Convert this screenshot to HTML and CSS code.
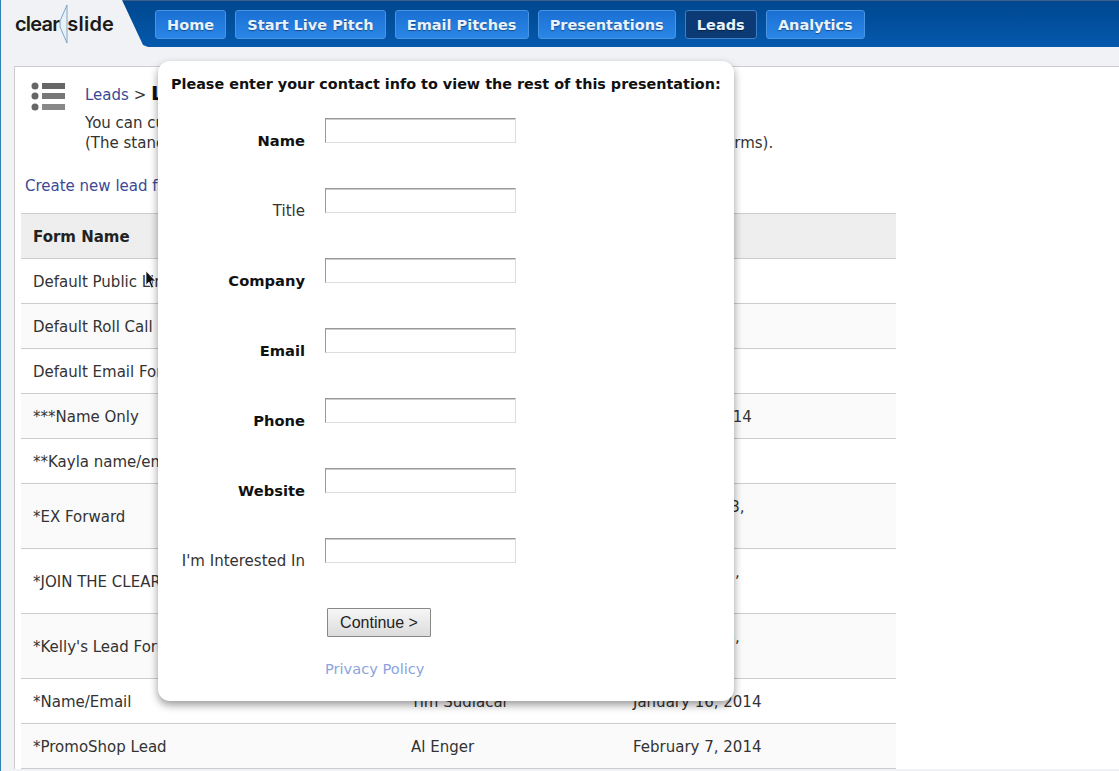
FILE: index.html
```html
<!DOCTYPE html>
<html lang="en">
<head>
    <meta charset="UTF-8">
    <title>ClearSlide - Leads</title>
    <link rel="stylesheet" href="styles.css">
</head>
<body>

<div class="header">
    <a class="logo">
        <span>clear</span>
        <svg class="logo-mark" width="12" height="40" viewBox="0 0 12 40">
            <path d="M9 1 L9 39 L2 23 L2 17 Z" fill="#e9f1f8" stroke="#7fa6c4" stroke-width="1"/>
        </svg>
        <span class="logo-slide">slide</span>
    </a>
    <div class="nav">
        <a class="nav-btn">Home</a>
        <a class="nav-btn">Start Live Pitch</a>
        <a class="nav-btn">Email Pitches</a>
        <a class="nav-btn">Presentations</a>
        <a class="nav-btn active">Leads</a>
        <a class="nav-btn">Analytics</a>
    </div>
</div>

<div class="panel">
    <div class="title-row">
        <svg class="list-icon" width="36" height="30" viewBox="0 0 36 30">
            <circle cx="5" cy="5" r="3.5" fill="#666"/>
            <circle cx="5" cy="15" r="3.5" fill="#666"/>
            <circle cx="5" cy="26" r="3.5" fill="#666"/>
            <rect x="12" y="2" width="23" height="6" fill="#666"/>
            <rect x="12" y="12" width="23" height="6" fill="#777"/>
            <rect x="12" y="23" width="23" height="6" fill="#888"/>
        </svg>
        <div class="title-text">
            <div class="crumb"><a class="link">Leads</a> &gt; <b class="crumb-title">Lead Forms</b></div>
            <p class="intro">You can customize the information you collect from viewers.<br>(The standard forms are provided by default, and you can create and revise custom forms).</p>
        </div>
    </div>

    <a class="link create-link">Create new lead form</a>

    <table class="leads">
        <tr><th class="col-name">Form Name</th><th class="col-by">Created By</th><th class="col-date">Created</th><th></th></tr>
        <tr><td>Default Public Link Form</td><td>ClearSlide</td><td>July 1, 2012</td><td></td></tr>
        <tr><td>Default Roll Call Form</td><td>ClearSlide</td><td>July 1, 2012</td><td></td></tr>
        <tr><td>Default Email Form</td><td>ClearSlide</td><td>July 1, 2012</td><td></td></tr>
        <tr><td>***Name Only</td><td>Tim Sudlacar</td><td>January 9, 2014</td><td></td></tr>
        <tr><td>**Kayla name/email</td><td>Kayla Ross</td><td>July 8, 2013</td><td></td></tr>
        <tr><td>*EX Forward</td><td>Al Enger</td><td>September 13,<br>2013</td><td></td></tr>
        <tr><td>*JOIN THE CLEARSLIDE TEAM</td><td>Tim Sudlacar</td><td>November 13,<br>2013</td><td></td></tr>
        <tr><td>*Kelly's Lead Form</td><td>Kelly Hart</td><td>November 18,<br>2013</td><td></td></tr>
        <tr><td>*Name/Email</td><td>Tim Sudlacar</td><td>January 16, 2014</td><td></td></tr>
        <tr><td>*PromoShop Lead</td><td>Al Enger</td><td>February 7, 2014</td><td></td></tr>
    </table>
</div>

<svg class="cursor" width="12" height="19" viewBox="0 0 12 19">
    <path d="M1 1 L1 15 L4 12 L6.5 18 L8.5 17 L6 11 L10.5 11 Z" fill="#111" stroke="#fff" stroke-width="0.7"/>
</svg>

<div class="modal">
    <h3 class="modal-title">Please enter your contact info to view the rest of this presentation:</h3>
    <div class="field"><label class="req">Name</label><input type="text"></div>
    <div class="field"><label>Title</label><input type="text"></div>
    <div class="field"><label class="req">Company</label><input type="text"></div>
    <div class="field"><label class="req">Email</label><input type="text"></div>
    <div class="field"><label class="req">Phone</label><input type="text"></div>
    <div class="field"><label class="req">Website</label><input type="text"></div>
    <div class="field"><label>I'm Interested In</label><input type="text"></div>
    <button class="continue">Continue &gt;</button>
    <a class="privacy">Privacy Policy</a>
</div>

</body>
</html>
```
FILE: styles.css
```css
html, body {
    margin: 0;
    height: 771px;
    overflow: hidden;
}
body {
    font-family: "DejaVu Sans", Verdana, sans-serif;
    font-size: 14px;
    color: #333;
    background-color: #f0f2f5;
    border-left: 1px solid #2f7fb5;
}
.header {
    display: flex;
    height: 47px;
}
.logo {
    width: 121px;
    flex: none;
    display: flex;
    align-items: center;
    padding-left: 14px;
    box-sizing: border-box;
    font-family: Inter, "Liberation Sans", sans-serif;
    font-size: 20px;
    font-weight: 600;
    letter-spacing: -0.8px;
    color: #1a1a1a;
}
.logo-mark {
    margin: 0 -3px 0 -1px;
}
.logo-slide {
    letter-spacing: 0.2px;
}
.nav {
    flex: 1;
    display: flex;
    gap: 9px;
    padding: 11px 0 0 33px;
    box-sizing: border-box;
    background: linear-gradient(#00478f, #0559ad);
    border-top: 1px solid #3b5f8a;
    clip-path: polygon(0 0, 100% 0, 100% 100%, 26px 100%, 21px 96%);
}
.nav-btn {
    height: 27px;
    padding: 0 11.1px;
    line-height: 28px;
    font-weight: bold;
    font-size: 14.5px;
    color: #e8f2fc;
    text-shadow: 0 1px 1px rgba(0, 0, 0, 0.4);
    background: linear-gradient(#1a70d2, #2a86e8);
    border: 1px solid #4a94e4;
    border-radius: 3px;
    margin-top: -2px;
}
.nav-btn.active {
    background: #0c3a74;
    border-color: #3f7fc8;
}
.panel {
    margin: 19px 0 0 13px;
    padding: 14px 0 0 6px;
    background-color: #fff;
    border: 1px solid #ccc;
    border-right: none;
    border-bottom: none;
}
.title-row {
    display: flex;
}
.list-icon {
    margin-left: 9px;
    flex: none;
}
.title-text {
    margin-left: 19px;
    padding-top: 2px;
}
.crumb {
    font-size: 15px;
    line-height: 20px;
}
.crumb-title {
    font-size: 20px;
    color: #111;
}
.intro {
    margin: 8px 0 0;
    line-height: 20px;
    white-space: nowrap;
    font-size: 15px;
}
.link {
    color: #3b4a96;
}
.create-link {
    display: block;
    margin: 23px 0 17px 4px;
    font-size: 15px;
    line-height: 20px;
}
.leads {
    width: 875px;
    border-collapse: collapse;
    font-size: 15px;
    table-layout: fixed;
}
.leads th {
    height: 43px;
    padding: 1px 12px 0;
    text-align: left;
    background-color: #eee;
    border-top: 1px solid #ccc;
    border-bottom: 1px solid #ccc;
    color: #222;
}
.leads td {
    padding: 13px 12px 11px;
    border-bottom: 1px solid #ccc;
    line-height: 20px;
    color: #333;
}
.leads tr:nth-child(odd) td {
    background-color: #fafafa;
}
.col-name {
    width: 354px;
}
.col-by {
    width: 198px;
}
.col-date {
    width: 130px;
}
.cursor {
    position: absolute;
    left: 145px;
    top: 270px;
}
.modal {
    position: absolute;
    left: 158px;
    top: 61px;
    width: 576px;
    height: 640px;
    box-sizing: border-box;
    padding: 13px 0 0 13px;
    background-color: #fff;
    border-radius: 12px;
    box-shadow: 0 4px 9px rgba(0, 0, 0, 0.4);
}
.modal-title {
    margin: 0 0 24px;
    font-size: 14.37px;
    line-height: 20px;
    color: #111;
    white-space: nowrap;
}
.field {
    display: flex;
    height: 70px;
}
.field label {
    width: 134px;
    text-align: right;
    padding-top: 13px;
    line-height: 20px;
    height: 20px;
    font-size: 15px;
}
.field label.req {
    font-size: 14.7px;
    font-weight: bold;
    color: #111;
}
.field input {
    width: 191px;
    height: 25px;
    box-sizing: border-box;
    margin: 0 0 0 20px;
    border: 1px solid #ddd;
    border-top-color: #999;
    border-left-color: #999;
    box-shadow: inset 0 1px #ccc;
    background-color: #fff;
}
.continue {
    display: block;
    width: 104px;
    height: 29px;
    margin: 0 0 0 156px;
    padding: 0;
    font-family: "Liberation Sans", Arial, sans-serif;
    font-size: 16px;
    color: #222;
    background: linear-gradient(#f6f6f6, #dcdcdc);
    border: 1px solid #888;
    border-radius: 1px;
}
.privacy {
    display: block;
    margin: 22px 0 0 154px;
    font-size: 14.6px;
    line-height: 20px;
    color: #8ba4dd;
}
```
